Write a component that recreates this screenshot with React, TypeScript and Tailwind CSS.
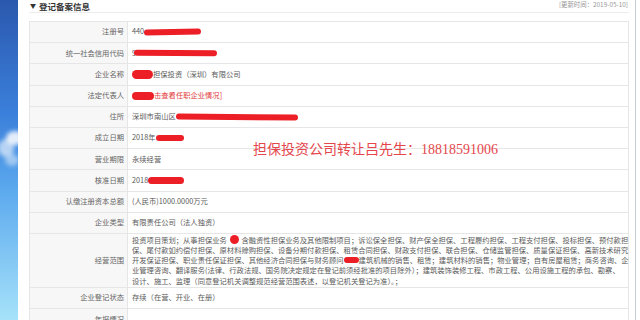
import React from "react";

const CJK = "font-['Noto_Sans_CJK_SC','Noto_Sans',sans-serif]";

// red marker strokes that hide parts of the record
function Mark({ w, h = 6, className = "" }: { w: number; h?: number; className?: string }) {
  return (
    <span
      className={`inline-block shrink-0 rounded-full bg-[#ec1f26] align-middle ${className}`}
      style={{ width: w, height: h }}
    />
  );
}

function Row({
  label,
  children,
  tall = false,
}: {
  label: string;
  children?: React.ReactNode;
  tall?: boolean;
}) {
  return (
    <div className={`flex border-b border-[#e6e6e6] ${tall ? "h-[54px]" : "h-[21.2px]"}`}>
      <div className="flex w-[98px] shrink-0 items-center justify-end border-r border-[#e6e6e6] bg-[#f7f7f7] pr-[3px] text-[#666]">
        {label}
      </div>
      <div className="flex min-w-0 flex-1 items-center whitespace-nowrap pl-[4px] text-[#5a5a5a]">
        {children}
      </div>
    </div>
  );
}

function SideStrip() {
  return (
    <svg width="18" height="320" viewBox="0 0 18 320" className="block shrink-0">
      <defs>
        <linearGradient id="sky" x1="0" y1="0" x2="0" y2="1">
          <stop offset="0" stopColor="#2b58ae" />
          <stop offset="0.35" stopColor="#3a7fda" />
          <stop offset="0.6" stopColor="#5daaee" />
          <stop offset="1" stopColor="#a6e2f9" />
        </linearGradient>
        <filter id="soft" x="-50%" y="-50%" width="200%" height="200%">
          <feGaussianBlur stdDeviation="2.2" />
        </filter>
      </defs>
      <rect width="18" height="320" fill="url(#sky)" />
      <g filter="url(#soft)" fill="#ffffff">
        <ellipse cx="15" cy="138" rx="9" ry="7" opacity="0.85" />
        <ellipse cx="6" cy="148" rx="8" ry="9" opacity="0.6" />
        <ellipse cx="12" cy="160" rx="7" ry="6" opacity="0.45" />
      </g>
    </svg>
  );
}

export default function App() {
  return (
    <div className={`relative flex h-[320px] w-[640px] overflow-hidden bg-white ${CJK} text-[7.3px] leading-none`}>
      <SideStrip />

      <div className="ml-[11px] flex w-[600px] shrink-0 flex-col">
        {/* section header */}
        <div className="flex h-[14px] items-center justify-between border-b border-[#ececec] pl-[1px]">
          <div className="flex items-center gap-[3px] leading-[12px] text-[#333]">
            <span className="text-[6px]">▼</span>
            <span className="text-[8.5px] font-bold">登记备案信息</span>
          </div>
          <span className="self-start pr-[1px] text-[6.4px] leading-[10px] text-[#999]">[更新时间：2019-05-10]</span>
        </div>

        <div className="mt-[8px] border-x border-t border-[#e6e6e6]">
          <Row label="注册号">
            440
            <Mark w={57} h={6} className="-rotate-1" />
          </Row>
          <Row label="统一社会信用代码">
            9
            <Mark w={83} h={6} className="-ml-[2px] rotate-[0.5deg]" />
          </Row>
          <Row label="企业名称">
            <Mark w={21} h={9} />
            担保投资（深圳）有限公司
          </Row>
          <Row label="法定代表人">
            <Mark w={22} h={8} />
            <span className="text-[#e23b3b]">击查看任职企业情况]</span>
          </Row>
          <Row label="住所">
            深圳市南山区
            <Mark w={122} h={6} className="rotate-[0.5deg]" />
          </Row>
          <Row label="成立日期">
            2018年
            <Mark w={28} h={6} />
          </Row>
          <Row label="营业期限">永续经营</Row>
          <Row label="核准日期">
            2018
            <Mark w={36} h={7} />
          </Row>
          <Row label="认缴注册资本总额">(人民币)1000.0000万元</Row>
          <Row label="企业类型">有限责任公司（法人独资）</Row>
          <Row label="经营范围" tall>
            <div className="leading-[10.2px]">
              <div className="flex items-center">
                投资项目策划；从事担保业务
                <span className="inline-flex w-[14.6px] items-center">
                  <span className="ml-[3px] h-[9px] w-[9px] rounded-full bg-[#ec1f26]" />
                </span>
                含融资性担保业务及其他限制项目；诉讼保全担保、财产保全担保、工程履约担保、工程支付担保、投标担保、预付款担
              </div>
              <div>保、尾付款如约偿付担保、原材料赊购担保、设备分期付款担保、租赁合同担保、财政支付担保、联合担保、仓储监管担保、质量保证担保、高新技术研究</div>
              <div className="flex items-center">
                开发保证担保、职业责任保证担保、其他经济合同担保与财务顾问
                <Mark w={15} h={6} />
                建筑机械的销售、租赁；建筑材料的销售；物业管理；自有房屋租赁；商务咨询、企
              </div>
              <div>业管理咨询、翻译服务(法律、行政法规、国务院决定规定在登记前须经批准的项目除外）；建筑装饰装修工程、市政工程、公用设施工程的承包、勘察、</div>
              <div>设计、施工、监理（同意登记机关调整规范经营范围表述，以登记机关登记为准）。；</div>
            </div>
          </Row>
          <Row label="企业登记状态">存续（在营、开业、在册）</Row>
          <Row label="年报情况" />
        </div>
      </div>

      <div className="ml-[6px] w-px shrink-0 bg-[#c6ccd6]" />

      {/* watermark text stamped over the table */}
      <div className="absolute left-[253px] top-[143px] whitespace-nowrap font-['Liberation_Serif','Noto_Sans_CJK_SC',serif] text-[14px] leading-none text-[#e4464c]">
        担保投资公司转让吕先生：18818591006
      </div>
    </div>
  );
}
